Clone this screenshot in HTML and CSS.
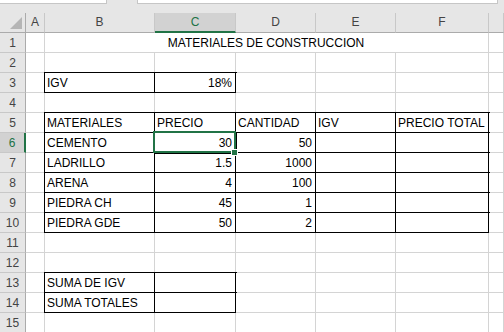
FILE: index.html
```html
<!DOCTYPE html>
<html lang="es">
<head>
    <meta charset="UTF-8">
    <meta name="viewport" content="width=device-width, initial-scale=1.0">
    <title>Materiales de construccion</title>
    <link rel="stylesheet" href="styles.css">
</head>
<body>
    <div class="topbar">
        <div class="name-box"></div>
        <div class="formula-box"></div>
    </div>

    <div class="sheet">
        <!-- column headers -->
        <div class="corner"><span class="corner-mark"></span></div>
        <div class="col-head">A</div>
        <div class="col-head">B</div>
        <div class="col-head sel">C</div>
        <div class="col-head">D</div>
        <div class="col-head">E</div>
        <div class="col-head">F</div>
        <div class="col-head"></div>

        <!-- 1 -->
        <div class="row-head">1</div>
        <div class="cell"></div>
        <div class="cell title">MATERIALES DE CONSTRUCCION</div>
        <div class="cell"></div>

        <!-- 2 -->
        <div class="row-head">2</div>
        <div class="cell"></div><div class="cell"></div><div class="cell"></div><div class="cell"></div>
        <div class="cell"></div><div class="cell"></div><div class="cell"></div>

        <!-- 3 -->
        <div class="row-head">3</div>
        <div class="cell"></div>
        <div class="cell bx">IGV</div>
        <div class="cell bx num">18%</div>
        <div class="cell"></div><div class="cell"></div><div class="cell"></div><div class="cell"></div>

        <!-- 4 -->
        <div class="row-head">4</div>
        <div class="cell"></div><div class="cell"></div><div class="cell"></div><div class="cell"></div>
        <div class="cell"></div><div class="cell"></div><div class="cell"></div>

        <!-- 5 -->
        <div class="row-head">5</div>
        <div class="cell"></div>
        <div class="cell bx">MATERIALES</div>
        <div class="cell bx">PRECIO</div>
        <div class="cell bx">CANTIDAD</div>
        <div class="cell bx">IGV</div>
        <div class="cell bx">PRECIO TOTAL</div>
        <div class="cell"></div>

        <!-- 6 -->
        <div class="row-head sel">6</div>
        <div class="cell"></div>
        <div class="cell bx">CEMENTO</div>
        <div class="cell bx num active">30<span class="selection"></span><span class="fill-handle"></span></div>
        <div class="cell bx num">50</div>
        <div class="cell bx"></div>
        <div class="cell bx"></div>
        <div class="cell"></div>

        <!-- 7 -->
        <div class="row-head">7</div>
        <div class="cell"></div>
        <div class="cell bx">LADRILLO</div>
        <div class="cell bx num">1.5</div>
        <div class="cell bx num">1000</div>
        <div class="cell bx"></div>
        <div class="cell bx"></div>
        <div class="cell"></div>

        <!-- 8 -->
        <div class="row-head">8</div>
        <div class="cell"></div>
        <div class="cell bx">ARENA</div>
        <div class="cell bx num">4</div>
        <div class="cell bx num">100</div>
        <div class="cell bx"></div>
        <div class="cell bx"></div>
        <div class="cell"></div>

        <!-- 9 -->
        <div class="row-head">9</div>
        <div class="cell"></div>
        <div class="cell bx">PIEDRA CH</div>
        <div class="cell bx num">45</div>
        <div class="cell bx num">1</div>
        <div class="cell bx"></div>
        <div class="cell bx"></div>
        <div class="cell"></div>

        <!-- 10 -->
        <div class="row-head">10</div>
        <div class="cell"></div>
        <div class="cell bx">PIEDRA GDE</div>
        <div class="cell bx num">50</div>
        <div class="cell bx num">2</div>
        <div class="cell bx"></div>
        <div class="cell bx"></div>
        <div class="cell"></div>

        <!-- 11 -->
        <div class="row-head">11</div>
        <div class="cell"></div><div class="cell"></div><div class="cell"></div><div class="cell"></div>
        <div class="cell"></div><div class="cell"></div><div class="cell"></div>

        <!-- 12 -->
        <div class="row-head">12</div>
        <div class="cell"></div><div class="cell"></div><div class="cell"></div><div class="cell"></div>
        <div class="cell"></div><div class="cell"></div><div class="cell"></div>

        <!-- 13 -->
        <div class="row-head">13</div>
        <div class="cell"></div>
        <div class="cell bx">SUMA DE IGV</div>
        <div class="cell bx"></div>
        <div class="cell"></div><div class="cell"></div><div class="cell"></div><div class="cell"></div>

        <!-- 14 -->
        <div class="row-head">14</div>
        <div class="cell"></div>
        <div class="cell bx">SUMA TOTALES</div>
        <div class="cell bx"></div>
        <div class="cell"></div><div class="cell"></div><div class="cell"></div><div class="cell"></div>

        <!-- 15 -->
        <div class="row-head">15</div>
        <div class="cell"></div><div class="cell"></div><div class="cell"></div><div class="cell"></div>
        <div class="cell"></div><div class="cell"></div><div class="cell"></div>
    </div>
</body>
</html>
```

FILE: styles.css
```css
* {
    margin: 0;
    padding: 0;
    box-sizing: border-box;
}

body {
    width: 504px;
    height: 332px;
    overflow: hidden;
    background: #ffffff;
    font-family: "Liberation Sans", Arial, sans-serif;
    font-size: 12px;
    color: #000000;
}

/* strip left of the formula bar */
.topbar {
    display: flex;
    align-items: flex-start;
    height: 13px;
    background: #e6e6e6;
}

.name-box {
    width: 107px;
    height: 4px;
    background: #ffffff;
    border: 1px solid #c6c6c6;
    border-top: none;
    border-left: none;
}

.formula-box {
    width: 361px;
    height: 4px;
    margin-left: 30px;
    background: #ffffff;
    border: 1px solid #c6c6c6;
    border-top: none;
}

.sheet {
    display: grid;
    grid-template-columns: 26px 19px 110px 81px 80px 80px 93px 1fr;
    grid-auto-rows: 20px;
}

.corner,
.col-head,
.row-head {
    background: #e6e6e6;
    color: #444444;
    text-align: center;
    padding-top: 1px;
    line-height: 17px;
}

.corner {
    position: relative;
    border-right: 1px solid #ababab;
    border-bottom: 1px solid #ababab;
}

.corner-mark {
    position: absolute;
    left: 10px;
    top: 4px;
    width: 0;
    height: 0;
    border-left: 12px solid transparent;
    border-bottom: 12px solid #b5b5b5;
}

.col-head {
    border-right: 1px solid #c8c8c8;
    border-bottom: 1px solid #ababab;
}

.col-head.sel {
    background: #d2d2d2;
    color: #217346;
    border-bottom: 2px solid #217346;
}

.row-head {
    border-right: 1px solid #ababab;
    border-bottom: 1px solid #c8c8c8;
    padding-top: 2px;
}

.row-head.sel {
    background: #d2d2d2;
    color: #217346;
    border-right: 2px solid #217346;
}

.cell {
    background: #ffffff;
    border-right: 1px solid #d4d4d4;
    border-bottom: 1px solid #d4d4d4;
    padding: 2px 3px 0 2px;
    line-height: 17px;
    white-space: nowrap;
    overflow: visible;
}

.cell.title {
    grid-column: span 5;
    text-align: center;
}

.cell.num {
    text-align: right;
}

/* thin black borders around the tables */
.cell.bx {
    border-color: #000000;
    box-shadow: 0 0 0 1px #000000;
}

.cell.active {
    position: relative;
}

.selection {
    position: absolute;
    left: -2px;
    top: -2px;
    right: -1px;
    bottom: -1px;
    border: 2px solid #217346;
    z-index: 2;
}

.fill-handle {
    position: absolute;
    left: 76px;
    top: 16px;
    width: 7px;
    height: 7px;
    background: #217346;
    border: 1px solid #ffffff;
    z-index: 3;
}
```
